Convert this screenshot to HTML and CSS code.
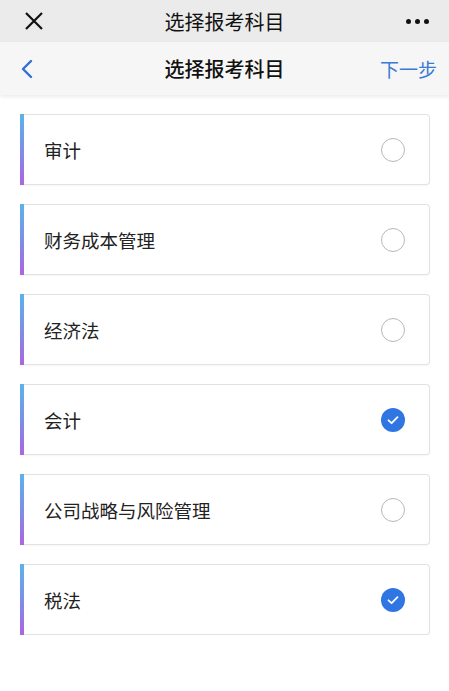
FILE: index.html
```html
<!DOCTYPE html>
<html lang="zh">
<head>
<meta charset="utf-8">
<link rel="stylesheet" href="styles.css">
</head>
<body>
<div class="statusbar">
  <svg class="close" width="20" height="20" viewBox="0 0 20 20"><path d="M2 2L18 18M18 2L2 18" stroke="#111" stroke-width="2.2" fill="none"/></svg>
  <div class="sb-title">选择报考科目</div>
  <div class="dots"><span></span><span></span><span></span></div>
</div>
<div class="navbar">
  <svg class="back" width="12" height="20" viewBox="0 0 12 20"><path d="M10 2L2 10L10 18" stroke="#2f6fd6" stroke-width="2.4" fill="none" stroke-linecap="round" stroke-linejoin="round"/></svg>
  <div class="nav-title">选择报考科目</div>
  <div class="next">下一步</div>
</div>
<div class="list">
  <div class="card"><span class="label">审计</span><span class="radio"></span></div>
  <div class="card"><span class="label">财务成本管理</span><span class="radio"></span></div>
  <div class="card"><span class="label">经济法</span><span class="radio"></span></div>
  <div class="card"><span class="label">会计</span><span class="radio checked"><svg width="24" height="24" viewBox="0 0 24 24"><path d="M7.5 12.3L10.6 15.2L16.5 9.2" stroke="#fff" stroke-width="1.8" fill="none" stroke-linecap="round" stroke-linejoin="round"/></svg></span></div>
  <div class="card"><span class="label">公司战略与风险管理</span><span class="radio"></span></div>
  <div class="card"><span class="label">税法</span><span class="radio checked"><svg width="24" height="24" viewBox="0 0 24 24"><path d="M7.5 12.3L10.6 15.2L16.5 9.2" stroke="#fff" stroke-width="1.8" fill="none" stroke-linecap="round" stroke-linejoin="round"/></svg></span></div>
</div>
</body>
</html>
```
FILE: styles.css
```css
html, body {
  margin: 0;
  padding: 0;
  background: #fff;
  font-family: "Noto Sans CJK SC", "Noto Sans", sans-serif;
}
.statusbar {
  height: 42px;
  background: #ebebeb;
  display: grid;
  grid-template-columns: 1fr auto 1fr;
  align-items: center;
  padding: 0 20px;
  box-sizing: border-box;
}
.close { display: block; margin-left: 4px; }
.sb-title {
  font-size: 20px;
  color: #111;
}
.dots {
  display: flex;
  gap: 4px;
  justify-self: end;
}
.dots span {
  width: 5px;
  height: 5px;
  border-radius: 50%;
  background: #111;
}
.navbar {
  height: 53px;
  background: #f6f6f6;
  display: grid;
  grid-template-columns: 1fr auto 1fr;
  align-items: center;
  padding: 0 12px;
  box-sizing: border-box;
  box-shadow: 0 2px 4px rgba(0,0,0,0.08);
  position: relative;
}
.back { display: block; margin-left: 9px; }
.nav-title {
  font-size: 20px;
  color: #111;
  font-weight: 500;
}
.next {
  font-size: 19px;
  color: #3a7bd5;
  justify-self: end;
}
.list {
  padding: 19px 19px 0 20px;
  display: flex;
  flex-direction: column;
  gap: 19px;
}
.card {
  height: 71px;
  box-sizing: border-box;
  border: 1px solid #e2e2e2;
  border-left: none;
  border-radius: 0 4px 4px 0;
  box-shadow: 0 1px 2px rgba(0,0,0,0.04);
  display: flex;
  align-items: center;
  justify-content: space-between;
  padding: 0 24px 0 21px;
  position: relative;
}
.card::before {
  content: "";
  position: absolute;
  left: 0;
  top: -1px;
  bottom: -1px;
  width: 4px;
  background: linear-gradient(#5cb3e9, #7c8fe6 50%, #ab65e0);
}
.label {
  font-size: 18.5px;
  color: #222;
  margin-left: 3px;
}
.radio {
  width: 24px;
  height: 24px;
  box-sizing: border-box;
  border: 1.5px solid #b8b8b8;
  border-radius: 50%;
}
.radio.checked {
  border: none;
  background: #2f76e3;
}
.radio svg { display: block; }
```
